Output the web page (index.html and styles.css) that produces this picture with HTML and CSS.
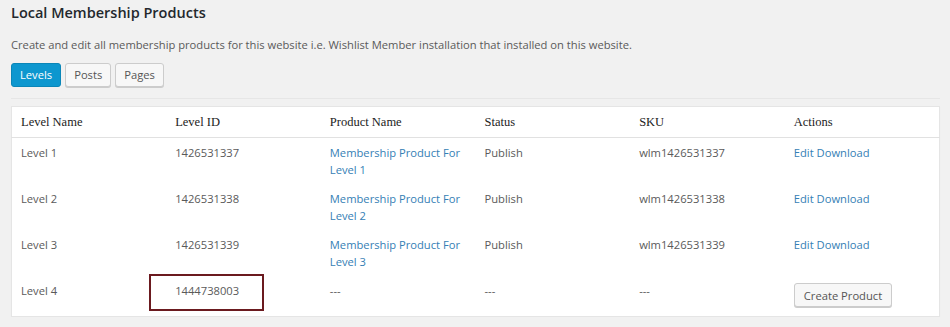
FILE: index.html
```html
<!DOCTYPE html>
<html lang="en">
<head>
    <meta charset="UTF-8" />
    <title>Local Membership Products</title>
    <link rel="stylesheet" href="styles.css">
</head>
<body>
    <h2 class="title">Local Membership Products</h2>
    <p class="desc">Create and edit all membership products for this website i.e. Wishlist Member installation that installed on this website.</p>

    <div class="tabs">
        <button class="btn btn-primary">Levels</button>
        <button class="btn">Posts</button>
        <button class="btn">Pages</button>
    </div>

    <hr class="sep">

    <table class="products">
        <thead>
            <tr>
                <th>Level Name</th>
                <th>Level ID</th>
                <th>Product Name</th>
                <th>Status</th>
                <th>SKU</th>
                <th>Actions</th>
            </tr>
        </thead>
        <tbody>
            <tr>
                <td>Level 1</td>
                <td>1426531337</td>
                <td><a href="#">Membership Product For Level 1</a></td>
                <td>Publish</td>
                <td>wlm1426531337</td>
                <td><a href="#">Edit Download</a></td>
            </tr>
            <tr>
                <td>Level 2</td>
                <td>1426531338</td>
                <td><a href="#">Membership Product For Level 2</a></td>
                <td>Publish</td>
                <td>wlm1426531338</td>
                <td><a href="#">Edit Download</a></td>
            </tr>
            <tr>
                <td>Level 3</td>
                <td>1426531339</td>
                <td><a href="#">Membership Product For Level 3</a></td>
                <td>Publish</td>
                <td>wlm1426531339</td>
                <td><a href="#">Edit Download</a></td>
            </tr>
            <tr class="last">
                <td>Level 4</td>
                <td><span class="marked">1444738003</span></td>
                <td>---</td>
                <td>---</td>
                <td>---</td>
                <td><button class="btn btn-small">Create Product</button></td>
            </tr>
        </tbody>
    </table>
</body>
</html>
```

FILE: styles.css
```css
body {
    margin: 0;
    padding: 0 10px 0 11px;
    background: #f1f1f1;
    color: #5a5a5a;
    font-family: "Open Sans", sans-serif;
    font-size: 11.2px;
    line-height: 16.5px;
}
.title {
    margin: 3px 0 0;
    font-size: 14.5px;
    font-weight: 600;
    line-height: 20px;
    color: #23282d;
}
.desc {
    margin: 14px 0 0;
}
.tabs {
    display: flex;
    gap: 4px;
    margin-top: 9px;
}
.btn {
    height: 24px;
    padding: 0 8px;
    font-family: "Open Sans", sans-serif;
    font-size: 11.2px;
    color: #555;
    background: #f7f7f7;
    border: 1px solid #cccccc;
    border-radius: 3px;
    box-shadow: 0 1px 0 #ccc;
}
.btn-primary {
    background: #0d97cf;
    border-color: #0a86b8;
    color: #fff;
    box-shadow: none;
}
.btn-small {
    height: 24px;
    padding: 0 9px;
}
.sep {
    margin: 11px 0 0;
    border: 0;
    border-top: 1px solid #e6e6e6;
}
.products {
    width: 100%;
    margin-top: 7px;
    table-layout: fixed;
    border-collapse: collapse;
    background: #fff;
    border: 1px solid #e5e5e5;
    box-shadow: 0 1px 1px rgba(0, 0, 0, .04);
}
.products th {
    text-align: left;
    font-family: "Liberation Serif", serif;
    font-weight: normal;
    font-size: 12.5px;
    color: #222;
    padding: 7px 9px 7px;
    height: 16px;
    border-bottom: 1px solid #e1e1e1;
}
.products td {
    vertical-align: top;
    padding: 7px 9px 6px;
    height: 33px;
}
.products tr.last td {
    height: 27px;
}
.products a {
    color: #3580b5;
    text-decoration: none;
}
.marked {
    position: relative;
}
.marked::after {
    content: "";
    position: absolute;
    inset: -9px -25px -13px -26px;
    border: 2px solid #6b1a1f;
}
```
